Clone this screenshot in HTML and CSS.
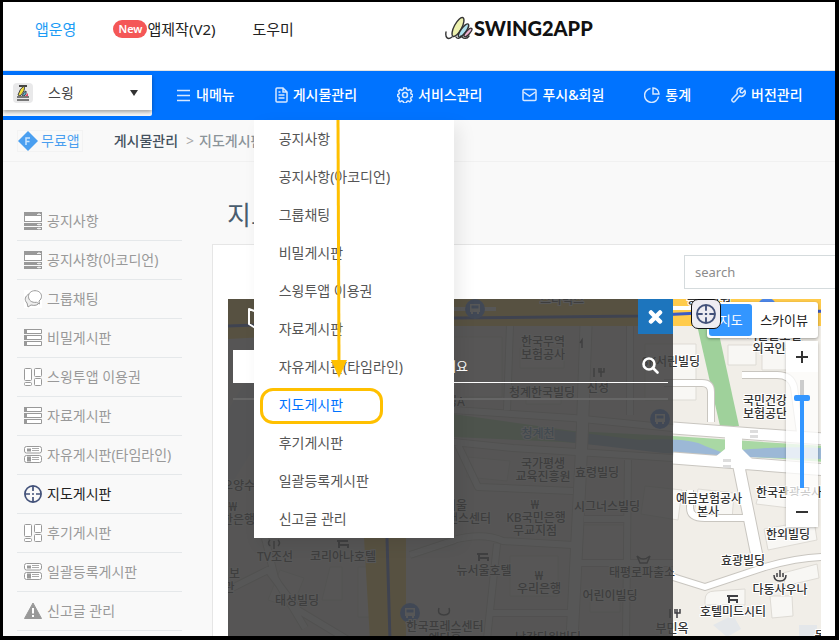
FILE: index.html
```html
<!DOCTYPE html>
<html lang="ko">
<head>
<meta charset="utf-8">
<meta name="viewport" content="width=device-width, initial-scale=1">
<title>SWING2APP - 지도게시판</title>
<link rel="stylesheet" href="styles.css">
</head>
<body>
<svg width="0" height="0" class="defs" aria-hidden="true">
  <symbol id="i-accordion" viewBox="0 0 18 18"><path d="M0 0h18v10H0zM0 11h18v3H0zM0 15h18v3H0z" fill="#999"/><path d="M1 4h16v5H1z" fill="#fff"/><path d="M13 2.500h4M15 1v2M13 12.500h4M15 11.500v2M13 16.500h4M15 15.500v2" stroke="#eee"/></symbol>
  <symbol id="i-chat" viewBox="0 0 18 18"><path d="M0 0h18v18H0z" fill="#fff"/><path d="M5 4C1 6 0 10 3 13l1 4 3-2c4 1 7 0 8-2" fill="#eee" stroke="#999"/><path d="M11 .700c4 0 6.500 2.500 6.500 5.600 0 2-1 3.600-2.500 4.700l.5 3-3-1.700c-5 .700-8-2.200-8-5.700S7 .700 11 .700z" fill="#fff" stroke="#999"/></symbol>
  <symbol id="i-list" viewBox="0 0 18 18"><g fill="#fff" stroke="#999"><path d="M.5.500h17v4H.5zM.5 6.500h17v4H.5zM.5 12.500h17v4H.5z"/></g><path d="M0 0h3v5H0zM0 6h3v5H0zM0 12h3v5H0z" fill="#999"/></symbol>
  <symbol id="i-cards" viewBox="0 0 18 18"><g fill="#fff" stroke="#999"><rect x=".5" y=".5" width="7" height="12" rx="1"/><rect x="10.500" y=".5" width="7" height="8" rx="1"/><rect x=".5" y="14.500" width="7" height="3" rx="1"/><rect x="10.500" y="10.500" width="7" height="7" rx="1"/></g></symbol>
  <symbol id="i-timeline" viewBox="0 0 18 18"><g fill="#fff" stroke="#999"><rect x=".5" y=".5" width="17" height="6.500" rx="2"/><rect x=".5" y="9.500" width="17" height="7" rx="2"/></g><path d="M3 2.500h4v3H3zM3 10.500h4v5H3z" fill="#999"/><path d="M8 2.500h7M8 4.500h7M8 11.500h7M8 13.500h7" stroke="#aaa"/></symbol>
  <symbol id="i-target" viewBox="0 0 18 18"><circle cx="9" cy="9" r="8.100" fill="none" stroke="#43527a" stroke-width="1.700"/><path d="M9 1v5M9 12v5M1 9h5M12 9h5M8 9h2" stroke="#43527a" stroke-width="1.700"/></symbol>
  <symbol id="i-warn" viewBox="0 0 18 18"><path d="M9 1 17.500 16.500H.5z" fill="#999" stroke="#999" stroke-linejoin="round"/><path d="M9 6v5.500M9 13v2" stroke="#fff" stroke-width="2"/></symbol>
  <symbol id="i-bus" viewBox="0 0 20 20"><circle cx="10" cy="10" r="10" fill="#4c86e8"/><path d="M5 5h10v8H5zM6 13h2v2H6zM12 13h2v2h-2z" fill="#fff"/><path d="M6.500 6.500h7v3h-7z" fill="#4c86e8"/></symbol>
</svg>

<div class="frame">
  <header class="top">
    <nav class="top-nav" aria-label="서비스">
      <a href="#" class="current">앱운영</a>
      <a href="#"><span class="new">New</span>앱제작(V2)</a>
      <a href="#">도우미</a>
    </nav>
    <a href="#" class="logo">
      <svg width="28" height="24" viewBox="0 0 28 24" fill="none" stroke="#333" stroke-width="1.400" stroke-linecap="round" aria-hidden="true">
        <ellipse cx="13" cy="11" rx="3.800" ry="10.500" transform="rotate(28 13 11)" fill="#edf1ae"/>
        <ellipse cx="18.500" cy="14.500" rx="2.600" ry="8" transform="rotate(36 18.500 14.500)" fill="#aee0ed"/>
        <ellipse cx="23" cy="16.500" rx="1.900" ry="5.500" transform="rotate(42 23 16.500)" fill="#efb2d0"/>
        <path d="M1 16c-1 6 2 8 6 5M11 21c1 2 4 2 5-1M17 21c2 2 5 2 7-1"/>
      </svg>
      <span>SWING2APP</span>
    </a>
  </header>

  <div class="bar">
    <div class="picker">
      <button type="button">
        <svg width="20" height="20" viewBox="0 0 20 20" aria-hidden="true"><rect width="20" height="20" rx="4" fill="#e9e9ea"/><path d="M6 3h8" stroke="#444" stroke-width="2"/><path d="M5 12Q7 5 11 3q2 4-4 10z" fill="#f2df3a" stroke="#444"/><path d="M9 13q2-5 4-5 1 3-2 5z" fill="#58b7d6" stroke="#444"/><path d="m12 13 3-3v3z" fill="#d46"/><path d="M4 14h12M4 17h12" stroke="#777" stroke-width="2"/></svg>
        <span>스윙</span>
        <svg class="caret" width="8" height="6" viewBox="0 0 8 6" aria-hidden="true"><path d="M0 0h8L4 6z" fill="#333"/></svg>
      </button>
    </div>
    <nav class="menu" aria-label="메뉴">
      <div class="menu-item"><a href="#"><svg width="15" height="16" viewBox="0 0 15 16"><path d="M1 3.500h13M1 8.500h13M1 13.500h13"/></svg>내메뉴</a></div>
      <div class="menu-item"><a href="#"><svg width="13" height="16" viewBox="0 0 13 16"><path d="M1 2q0-1 1-1h6l4 4v9q0 1-1 1H2q-1 0-1-1zM8 1v4h4M3.500 5h2M3.500 8h6M3.500 11h6"/></svg>게시물관리</a>
        <div class="dropdown">
          <a href="#">공지사항</a>
          <a href="#">공지사항(아코디언)</a>
          <a href="#">그룹채팅</a>
          <a href="#">비밀게시판</a>
          <a href="#">스윙투앱 이용권</a>
          <a href="#">자료게시판</a>
          <a href="#">자유게시판(타임라인)</a>
          <a href="#" class="picked">지도게시판</a>
          <a href="#">후기게시판</a>
          <a href="#">일괄등록게시판</a>
          <a href="#">신고글 관리</a>
          <svg class="arrow" width="18" height="258" viewBox="0 0 18 258" aria-hidden="true"><path d="M8 0 9 244" stroke="#ffc000" stroke-width="3"/><path d="M1 240h16L9 258z" fill="#ffc000"/></svg>
        </div>
      </div>
      <div class="menu-item"><a href="#"><svg width="16" height="16" viewBox="0 0 16 16"><circle cx="8" cy="8" r="2.500"/><path d="M6.700 1h2.600l.5 1.800 1.400.600 1.700-.9 1.700 1.700-.9 1.700.5 1.200 1.700.500v1.800l-1.700.600-.6 1.500.9 1.600-1.700 1.700-1.700-.9-1.300.600-.5 1.500H6.700l-.5-1.500-1.400-.6-1.700.900-1.600-1.700.9-1.600-.6-1.500L.7 9.400V7.600l1.100-.5.600-1.200-.9-1.700 1.600-1.700 1.700.900 1.400-.6z"/></svg>서비스관리</a></div>
      <div class="menu-item"><a href="#"><svg width="15" height="16" viewBox="0 0 15 16"><rect x="1" y="2.500" width="13" height="11" rx="1"/><path d="m1.500 5 6 4 6-4"/></svg>푸시&amp;회원</a></div>
      <div class="menu-item"><a href="#"><svg width="16" height="16" viewBox="0 0 16 16"><path d="M6.500 1.500a7 7 0 1 0 8 8M9 1v6h6A6 6 0 0 0 9 1z"/></svg>통계</a></div>
      <div class="menu-item"><a href="#"><svg width="15" height="16" viewBox="0 0 15 16"><path d="M13.800 3.500 11.500 6l-2-.5-.5-2L11.300 1.300C8 0 5 3 6.300 6.500L1.200 12c-1.200 1.500 1 3.800 2.500 2.500L8.500 9c3.500 1.500 7-2 5.300-5.500z"/></svg>버전관리</a></div>
    </nav>
  </div>

  <div class="crumbs">
    <span class="plan"><svg width="20" height="20" viewBox="0 0 20 20" aria-hidden="true"><path d="m10 0 10 10-10 10L0 10z" fill="#4a9ff0"/><path d="M8 14V7h4M8 10.500h3.500" fill="none" stroke="#c9e5ff" stroke-width="1.500"/></svg>무료앱</span>
    <b>게시물관리</b><span class="sep">&gt;</span><b class="here">지도게시판</b>
  </div>

  <div class="content">
    <nav class="side" aria-label="게시판">
      <a href="#"><svg><use href="#i-accordion"/></svg>공지사항</a>
      <a href="#"><svg><use href="#i-accordion"/></svg>공지사항(아코디언)</a>
      <a href="#"><svg><use href="#i-chat"/></svg>그룹채팅</a>
      <a href="#"><svg><use href="#i-list"/></svg>비밀게시판</a>
      <a href="#"><svg><use href="#i-cards"/></svg>스윙투앱 이용권</a>
      <a href="#"><svg><use href="#i-list"/></svg>자료게시판</a>
      <a href="#"><svg><use href="#i-timeline"/></svg>자유게시판(타임라인)</a>
      <a href="#" class="on"><svg><use href="#i-target"/></svg>지도게시판</a>
      <a href="#"><svg><use href="#i-cards"/></svg>후기게시판</a>
      <a href="#"><svg><use href="#i-timeline"/></svg>일괄등록게시판</a>
      <a href="#"><svg><use href="#i-warn"/></svg>신고글 관리</a>
    </nav>

    <main>
      <h1>지도게시판</h1>
      <section class="panel">
        <div class="find"><input type="search" placeholder="search" aria-label="search"></div>
        <div class="map">
          <svg class="canvas" aria-label="지도" role="img">
            <g transform="translate(-228 -299)">
              <path d="M228 299h900v500H228z" fill="#f1eee8"/>
              <g fill="#f8f7f4" stroke="#dedbd5">
                <path d="M645 344h51v56h-51zM728 345h28v20h-28zM762 340h40v30h-40zM452 337h50v60h-54zM520 348h44v20h-44zM526 390h35v14h-35zM645 486l37 4-4 30-37-6zM698 489l36 4-2 27-38-6zM760 490l48 7-2 13-50-6zM764 529l50-9 3 20-49 10zM705 600q0-9 10-9l30-2v16h-40zM770 596h22l1 20-21 2zM468 457l42 4-3 20-40-4zM510 556h48v40h-48zM582 525h42v38l-42-3zM330 567h12v33h-20zM358 567h26v50h-26zM280 570l24 8-12 30-24-8zM783 573l34-9 2 14-34 8zM590 592h30v20h-30z"/>
              </g>
              <path d="M228 410 265 350v80l-37 60zM713 625l20-10 8 14-14 8zM799 625h18v15h-18z" fill="#e4e7ea"/>
              <path d="M697 325h20l22 101h-19z" fill="#9fd19b"/>
              <path d="M453 414l120 17 100 5 150 10v16l-150-11-110-9-110-5z" fill="#a9d8a4"/>
              <path d="M540 428l100 12q50-3 65 6l16 6 30-3q40-3 72-1v11l-80-2-80-4-120-14z" fill="#9cb8d6"/>
              <g fill="none" stroke="#c9c6c0" stroke-linejoin="round">
                <g stroke-width="13"><path d="M586 326l-4 114-10 200M673 428l150 11M673 458l155 12M732 436l6 26 21 104"/></g>
                <g stroke-width="8"><path d="M453 410l120 8 100 10M453 442l60 6 160 10M510 325l-3 85M630 325v90M458 445l20 42 95 4M453 540q30-8 50 1l70 4M497 544l-10 95M488 613h90M580 563h93M628 460l-2 180M584 519h45M673 577l32 10 60-20q35-10 60-10M664 383h38q9 0 9 9v30M742 375h35q14 0 17 12l6 46M690 490v18q0 10 15 10h40M228 590l40-20 30 40 50 30M265 538l10 40 30 50M410 555l45-15"/></g>
              </g>
              <g fill="none" stroke="#fff" stroke-linejoin="round">
                <g stroke-width="11"><path d="M586 326l-4 114-10 200M673 428l150 11M673 458l155 12M732 436l6 26 21 104"/></g>
                <g stroke-width="6"><path d="M453 410l120 8 100 10M453 442l60 6 160 10M510 325l-3 85M630 325v90M458 445l20 42 95 4M453 540q30-8 50 1l70 4M497 544l-10 95M488 613h90M580 563h93M628 460l-2 180M584 519h45M673 577l32 10 60-20q35-10 60-10M664 383h38q9 0 9 9v30M742 375h35q14 0 17 12l6 46M690 490v18q0 10 15 10h40M228 590l40-20 30 40 50 30M265 538l10 40 30 50M410 555l45-15"/></g>
              </g>
              <path d="M725 436h17v13l12 12h-44l15-12z" fill="#fff"/>
              <path d="M723 459h8v3h-8zM723 465h8v3h-8zM750 430h8v3h-8zM750 435h8v3h-8z" fill="#ddd"/>
              <path d="M228 299h900v27H453l-225 13zM364 538h42v102h-36z" fill="#ffcb4b"/>
              <path d="M228 326 453 318l185-2 62-3 130-2M387 538l3 102" fill="none" stroke="#3c5bc4" stroke-width="3"/>
              <path d="M440 309h56M664 308h30" stroke="#fff" stroke-width="4"/>
              <use href="#i-bus" x="465" y="299" width="20" height="20"/><use href="#i-bus" x="650" y="409" width="20" height="20"/><use href="#i-bus" x="400" y="603" width="20" height="20"/><use href="#i-bus" x="757" y="298" width="20" height="20"/>
              <g class="labels">
                <text x="562" y="304">스타벅스</text><text x="543" y="346">한국무역</text><text x="543" y="359">보험공사</text>
                <text x="542" y="397">청계한국빌딩</text><text x="598" y="392">신성</text><text x="450" y="406">빌딩A</text>
                <text x="538" y="438" class="water">청계천</text><text x="671" y="366">SK서린빌딩</text>
                <text x="543" y="468">국가평생</text><text x="543" y="481">교육진흥원</text><text x="597" y="477">효령빌딩</text>
                <text x="456" y="510">서울</text><text x="458" y="523">파이낸스센터</text><text x="536" y="522">KB국민은행</text><text x="535" y="535">무교지점</text>
                <text x="607" y="511">시그너스빌딩</text><text x="484" y="575">뉴서울호텔</text><text x="539" y="593">우리은행</text>
                <text x="642" y="577">태평로파출소</text><text x="610" y="600">어린이빌딩</text><text x="445" y="631">한국프레스센터</text><text x="548" y="642">남강타워빌딩</text><text x="445" y="643">예탄홀</text>
                <text x="244" y="490">오양수산</text><text x="233" y="524">신한은행</text><text x="275" y="561">TV조선</text><text x="343" y="561">코리아나호텔</text>
                <text x="297" y="605">태성빌딩</text><text x="229" y="578">일보</text><text x="229" y="592">관</text>
                <text x="709" y="304">종각타워</text><text x="774" y="340">서울글로벌</text><text x="780" y="353">외국인센터</text><text x="765" y="405">국민건강</text><text x="765" y="418">보험공단</text>
                <text x="709" y="503">예금보험공사</text><text x="708" y="516">본사</text><text x="789" y="497">한국관광공사</text><text x="788" y="539">한외빌딩</text>
                <text x="743" y="565">효광빌딩</text><text x="780" y="594">다동사우나</text><text x="733" y="616">호텔미드시티</text><text x="672" y="633">부민옥</text><text x="820" y="640">동</text>
                <text x="535" y="509">₩</text><text x="539" y="580">₩</text><text x="233" y="511">₩</text>
              </g>
              <g fill="none" stroke="#3f3f43" stroke-width="2">
                <path d="M727 596h11M729 596v7M730 600h7v3M477 554h11M479 554v7M480 558h8v3M337 541h11M339 541v7M340 545h8v3"/>
                <path d="M777 573v4M780 570v7M783 573v4M774 575q0 6 6 6t6-6M594 368v9M601 368v9M599 368v4h5v-4M670 609v9M677 609v9M675 609v4h5v-4" stroke-width="1.500"/>
                <path d="M637 556q6 6 13 0l-3 7h-7zM439 608q-2 7 5 7t5-7M274 541v8M270 540q-3 3 0 6M278 540q3 3 0 6M582 348v-8l-2 3" stroke-width="1.500"/>
              </g>
            </g>
          </svg>

          <div class="overlay">
            <div class="overlay-head">
              <svg width="26" height="24" viewBox="0 0 26 24" fill="none" stroke="#fff" stroke-width="2" stroke-linejoin="round" aria-hidden="true"><path d="m1 2 8 3 8-3 8 3v17l-8-3-8 3-8-5zM9 5v17M17 2v17"/></svg>
              <button type="button" class="close" aria-label="닫기"><svg width="15" height="14" viewBox="0 0 15 14"><path d="m3 2.500 9 9M12 2.500l-9 9" stroke="#fff" stroke-width="4.500" stroke-linecap="round"/></svg></button>
            </div>
            <form class="query">
              <select aria-label="분류"><option></option></select>
              <input type="text" aria-label="검색어" value="검색어를 입력해주세요">
              <button type="button" aria-label="검색"><svg width="17" height="17" viewBox="0 0 17 17" fill="none" stroke="#fff" stroke-width="2.600"><circle cx="7" cy="7" r="5.500"/><path d="m11 11 4.500 4.500" stroke-linecap="round"/></svg></button>
            </form>
          </div>

          <div class="types"><button type="button" class="active">지도</button><button type="button">스카이뷰</button></div>
          <button type="button" class="locate" aria-label="현재 위치"><svg width="20" height="20"><use href="#i-target"/></svg></button>
          <div class="zoom">
            <button type="button" aria-label="확대"><svg width="12" height="12"><path d="M0 6h12M6 0v12" stroke="#333" stroke-width="2"/></svg></button>
            <div class="slide"><input type="range" min="0" max="100" value="85" aria-label="확대 수준"></div>
            <button type="button" aria-label="축소"><svg width="12" height="12"><path d="M0 6h12" stroke="#333" stroke-width="2"/></svg></button>
          </div>
        </div>
      </section>
    </main>
  </div>
</div>
</body>
</html>
```
FILE: styles.css
```css
* { box-sizing: border-box; }
body {
  margin: 0;
  font: 14px/20px "Noto Sans", "Noto Sans CJK KR", sans-serif;
  color: #555;
}
a { color: inherit; text-decoration: none; }
button, input, select { font: inherit; margin: 0; }
button { display: flex; align-items: center; justify-content: center; padding: 0; border: 0; background: none; color: inherit; }
.defs { position: absolute; }

.frame {
  height: 100vh;
  overflow: hidden;
  display: flex;
  flex-direction: column;
  border: solid #000;
  border-width: 2px 4px 4px 3px;
  background: #f9f9f9;
}

/* Header */
.top {
  flex: none;
  display: flex;
  align-items: flex-start;
  height: 69px;
  padding: 14px 0 0 32px;
  border-bottom: 1px solid #e4e4e4;
  background: #fff;
}
.top-nav { display: flex; gap: 37px; padding-top: 3px; font-size: 15px; color: #222; white-space: nowrap; }
.top-nav .current { color: #1b9bf5; }
.top-nav a { display: flex; align-items: center; }
.new {
  padding: 0 5px;
  border-radius: 9px;
  background: #f45757;
  color: #fff;
  font-size: 11px;
  font-weight: 600;
  line-height: 18px;
}
.logo { display: flex; align-items: center; gap: 1px; margin-left: 151px; }
.logo span { font: 900 20px/24px Lato, sans-serif; color: #111; }

/* Blue menu bar */
.bar { flex: none; display: flex; height: 49px; background: #0073ff; color: #fff; position: relative; z-index: 2; }
.picker { width: 149px; height: 41px; margin: 4px 24px 0 0; background: #f7f7f7; border-radius: 0 2px 2px 0; }
.picker button { width: 100%; height: 35px; padding: 0 14px 0 10px; background: #fff; color: #444; box-shadow: 0 2px 4px rgba(0, 0, 0, .35); }
.picker span { margin-left: 15px; }
.caret { margin-left: auto; }
.menu { display: flex; gap: 40px; font-weight: 500; white-space: nowrap; }
.menu-item { position: relative; }
.menu-item > a { display: flex; align-items: center; gap: 5px; height: 100%; padding-bottom: 2px; }
.menu-item > a svg { fill: none; stroke: #d6e8ff; stroke-width: 1.5; }
.dropdown {
  position: absolute;
  top: 100%;
  left: -21px;
  width: 200px;
  background: #fff;
  color: #555;
  font-weight: 400;
  box-shadow: 6px 6px 16px rgba(0, 0, 0, .08);
}
.dropdown a { display: block; padding-left: 25px; line-height: 38px; }
.dropdown .picked { position: relative; color: #0073ff; }
.picked::after {
  content: "";
  position: absolute;
  inset: 2px 71px 0 6px;
  border: 3px solid #ffc000;
  border-radius: 13px;
}
.arrow { position: absolute; top: 0; left: 76px; }

/* Breadcrumb */
.crumbs { flex: none; display: flex; align-items: center; height: 42px; padding-left: 14px; border-bottom: 1px solid #f1f1f1; color: #44515e; }
.crumbs b { font-weight: 500; }
.crumbs .here { color: #8b9499; }
.plan { display: flex; align-items: center; gap: 3px; margin-right: 31px; padding-right: 2px; border: 1px solid #f3f3f3; color: #4a9ff0; }
.sep { padding: 0 5px 0 8px; color: #aaa; }

/* Page content */
.content { display: flex; flex: 1; min-height: 0; }
.side { flex: none; width: 165px; margin: 40px 30px 0 14px; color: #999; }
.side a { display: flex; align-items: center; gap: 5px; height: 39px; padding-left: 7px; border-bottom: 1px solid #e5e8ea; white-space: nowrap; }
.side svg { width: 18px; height: 18px; }
.side .on { color: #222; }
main { flex: 1; min-width: 0; display: flex; flex-direction: column; }
h1 { margin: 34px 0 10px 15px; font-size: 26px; line-height: 38px; font-weight: 400; color: #4a5d6e; }
.panel { flex: 1; min-height: 0; display: flex; flex-direction: column; padding: 10px 0 0 15px; border: solid #e6e6e6; border-width: 1px 0 0 1px; background: #fff; }
.find { display: flex; justify-content: flex-end; margin-bottom: 10px; }
.find input { width: 151px; height: 34px; padding: 0 10px; border: 1px solid #d5dbdd; border-right: 0; background: #fff; font-size: 13px; appearance: none; }
.find input::placeholder { color: #8c8c8c; }

/* Map */
.map { flex: 1; min-height: 0; position: relative; overflow: hidden; margin-right: 14px; font-size: 13px; }
.canvas { display: block; width: 100%; height: 100%; }
.labels { font-size: 12px; font-weight: 500; text-anchor: middle; fill: #333; stroke: #fff; stroke-width: 2px; paint-order: stroke; }
.labels .water { fill: #4a8fc0; }
.overlay { position: absolute; inset: 0 25% 0 0; background: rgba(64, 64, 64, .88); }
.overlay-head { display: flex; justify-content: space-between; padding-left: 20px; }
.overlay-head > svg { margin-top: 8px; }
.close { width: 35px; height: 35px; background: #1d75bd; }
.query { display: flex; align-items: flex-end; height: 66px; margin: 0 5px; padding-bottom: 15px; border-bottom: 2px solid #666; }
.query select { width: 100px; height: 33px; border: 0; background: #fff; }
.query input { flex: 1; min-width: 0; height: 35px; padding-left: 12px; border: 0; border-bottom: 1px solid #fff; background: none; color: #fff; }
.query button { width: 35px; height: 35px; border-bottom: 1px solid #fff; }
.types { position: absolute; top: 3px; right: 3px; display: flex; padding: 2px; border-radius: 3px; background: #fff; color: #222; box-shadow: 0 1px 3px rgba(0, 0, 0, .35); }
.types button { height: 32px; padding: 0 8px; border-radius: 3px; }
.types .active { width: 43px; padding: 0; background: #3396ff; color: #fff; }
.locate { position: absolute; top: 0; right: 100px; width: 30px; height: 30px; border: 1px solid #111; border-radius: 7px; background: #eeedf2; }
.zoom { position: absolute; top: 42px; right: 3px; width: 32px; border-radius: 3px; background: rgba(255, 255, 255, .75); box-shadow: 0 1px 3px rgba(0, 0, 0, .25); }
.zoom button { width: 32px; height: 31px; background: #fff; }
.slide { display: flex; justify-content: center; padding: 8px 0; }
.slide input { width: 16px; height: 108px; appearance: none; writing-mode: vertical-lr; direction: rtl; background: linear-gradient(#ccc 18px, #3396ff 18px) center / 4px 100% no-repeat; }
.slide input::-webkit-slider-thumb { appearance: none; width: 16px; height: 6px; border-radius: 2px; background: #3396ff; }
```
